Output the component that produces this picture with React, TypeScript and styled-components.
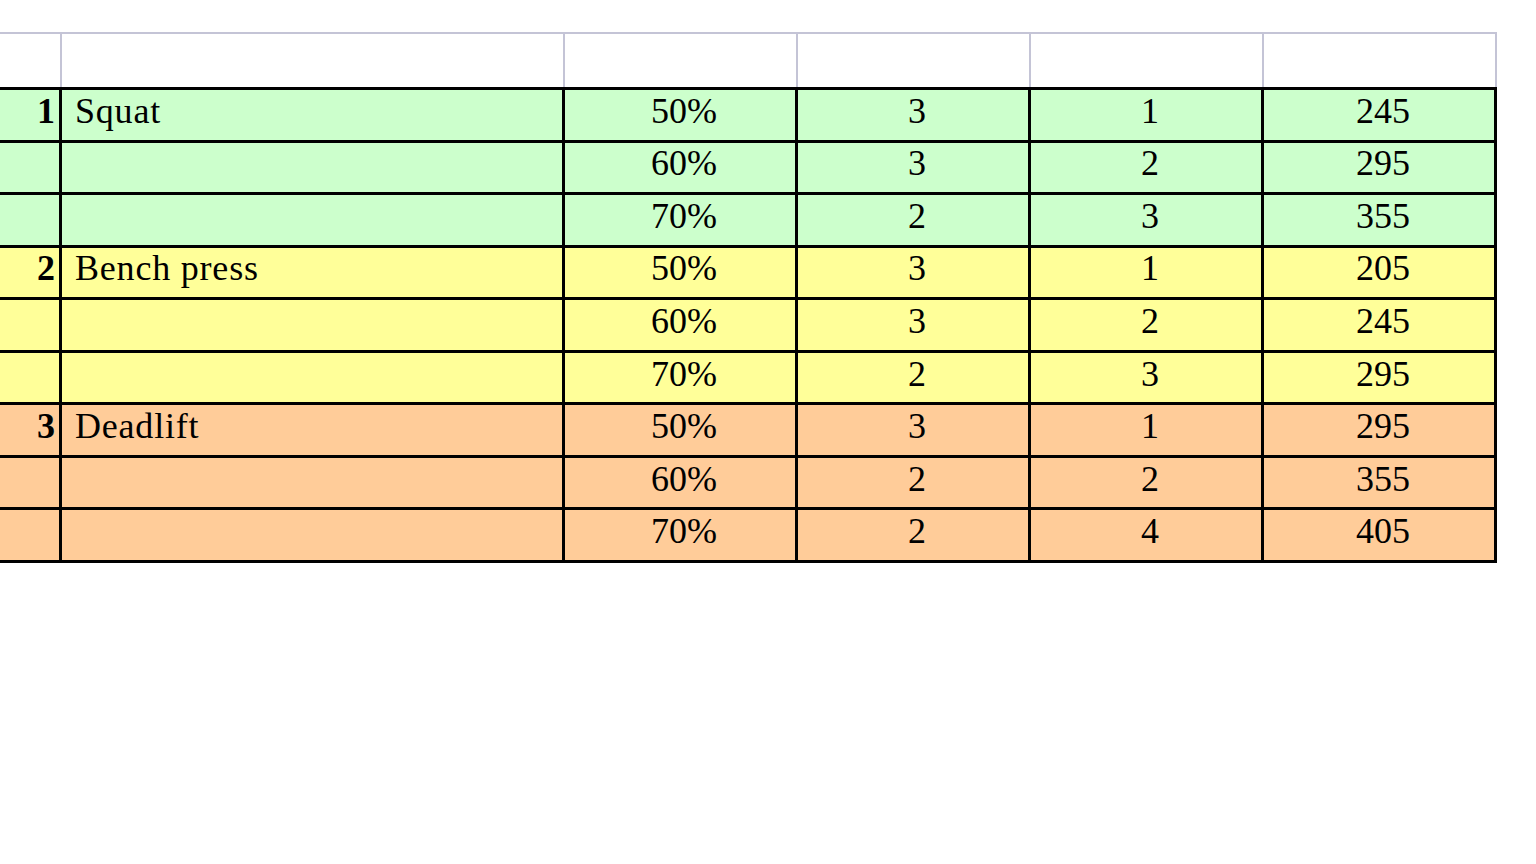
import React from "react";
import styled, { createGlobalStyle } from "styled-components";

const Global = createGlobalStyle`
  html, body { margin: 0; padding: 0; background: #ffffff; }
  body { font-family: "Liberation Serif", "Times New Roman", serif; color: #000; }
`;

const Page = styled.div`
  padding-top: 32px;
  width: 1536px;
  height: 864px;
  overflow: hidden;
  box-sizing: border-box;
`;

const Sheet = styled.table`
  border-collapse: collapse;
  table-layout: fixed;
  margin-left: -23px;
  font-size: 36px;
`;

const Col = styled.col<{ $w: number }>`
  width: ${(p) => p.$w}px;
`;

const HeadCell = styled.th`
  height: 53px;
  padding: 0;
  border: 2px solid #c4c4d6;
  border-bottom: none;
  background: #fff;
`;

const Row = styled.tr<{ $bg: string }>`
  background: ${(p) => p.$bg};
`;

const pads = {
  right: "0 4px 8px 0",
  left: "0 0 8px 13px",
  center: "0 0 8px 8px",
};

const Cell = styled.td<{ $align?: "left" | "right" | "center"; $bold?: boolean }>`
  height: 41.56px;
  padding: ${(p) => pads[p.$align ?? "center"]};
  border: 3px solid #000;
  text-align: ${(p) => p.$align ?? "center"};
  font-weight: ${(p) => (p.$bold ? 700 : 400)};
  letter-spacing: ${(p) => (p.$align === "left" ? "0.8px" : "0")};
  line-height: 40px;
  vertical-align: middle;
  white-space: nowrap;
`;

type Ex = { n: number; name: string; color: string; sets: [string, number, number, number][] };

const data: Ex[] = [
  { n: 1, name: "Squat", color: "#ccffcc", sets: [["50%", 3, 1, 245], ["60%", 3, 2, 295], ["70%", 2, 3, 355]] },
  { n: 2, name: "Bench press", color: "#ffff99", sets: [["50%", 3, 1, 205], ["60%", 3, 2, 245], ["70%", 2, 3, 295]] },
  { n: 3, name: "Deadlift", color: "#ffcc99", sets: [["50%", 3, 1, 295], ["60%", 2, 2, 355], ["70%", 2, 4, 405]] },
];

const widths = [82, 503, 233, 233, 233, 233];

export default function App() {
  return (
    <Page>
      <Global />
      <Sheet>
        <colgroup>
          {widths.map((w, i) => (
            <Col key={i} $w={w} />
          ))}
        </colgroup>
        <thead>
          <tr>
            {widths.map((_, i) => (
              <HeadCell key={i} />
            ))}
          </tr>
        </thead>
        <tbody>
          {data.flatMap((ex) =>
            ex.sets.map((s, i) => (
              <Row key={`${ex.n}-${i}`} $bg={ex.color}>
                <Cell $align="right" $bold>{i === 0 ? ex.n : ""}</Cell>
                <Cell $align="left">{i === 0 ? ex.name : ""}</Cell>
                <Cell>{s[0]}</Cell>
                <Cell>{s[1]}</Cell>
                <Cell>{s[2]}</Cell>
                <Cell>{s[3]}</Cell>
              </Row>
            ))
          )}
        </tbody>
      </Sheet>
    </Page>
  );
}
